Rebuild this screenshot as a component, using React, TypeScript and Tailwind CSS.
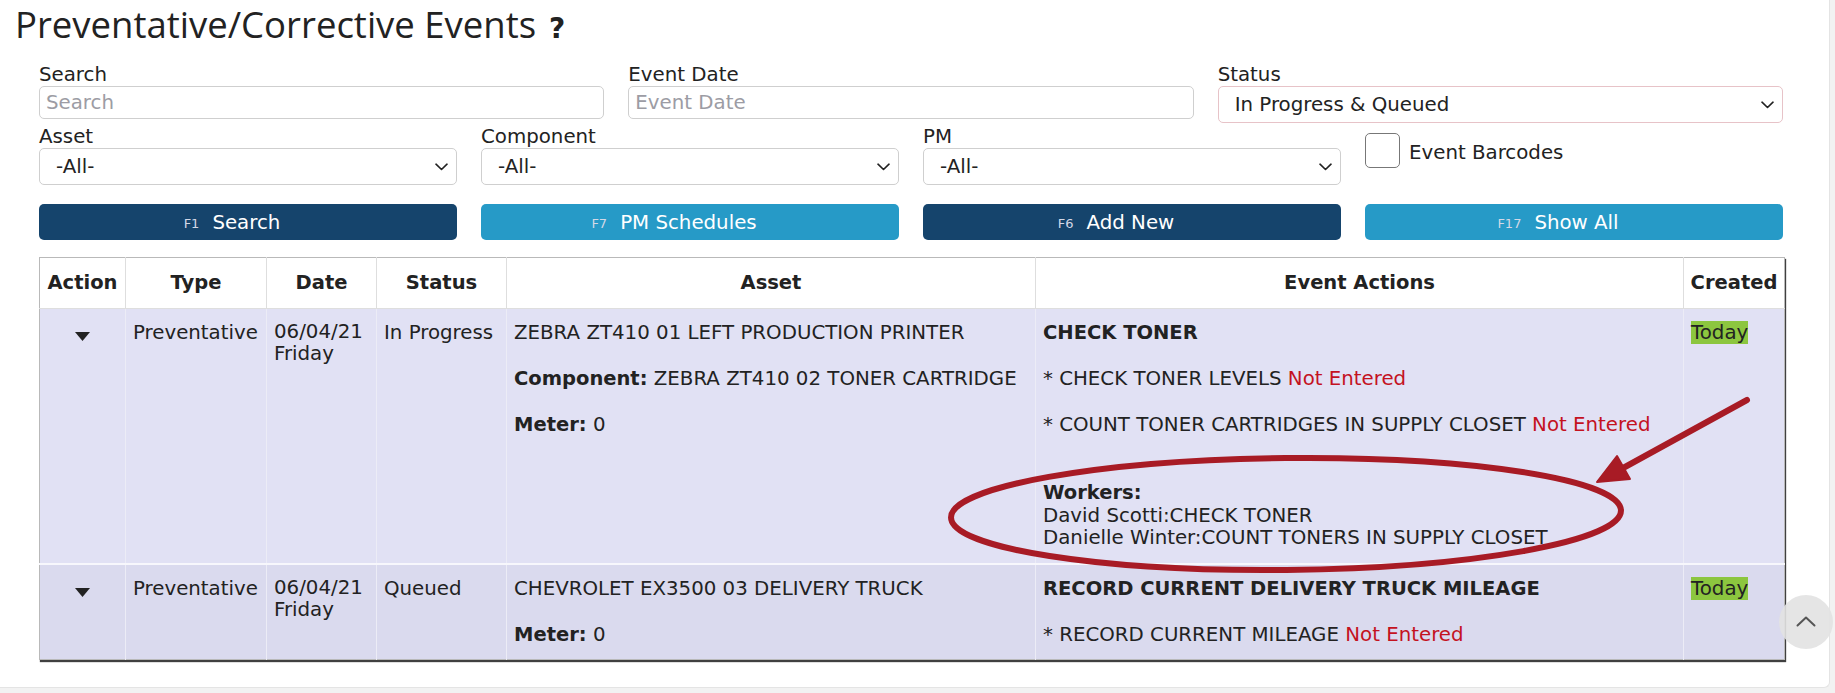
import React from 'react';

const RED = 'text-[#c4121f]';

function Chevron({ className }: { className?: string }) {
  return (
    <svg className={className} width="13" height="8" viewBox="0 0 13 8" fill="none">
      <path d="M1 1.2l5.5 5.3 5.5-5.3" stroke="#222" strokeWidth="1.6" strokeLinecap="round" strokeLinejoin="round" />
    </svg>
  );
}

function FakeSelect({ value, pink }: { value: string; pink?: boolean }) {
  return (
    <div
      className={`flex h-[37px] items-center justify-between rounded-[5px] border bg-white pl-[16px] pr-[8px] ${
        pink ? 'border-[#e7c3c8]' : 'border-[#cfcfcf]'
      }`}
    >
      <span className="text-[#222]">{value}</span>
      <Chevron />
    </div>
  );
}

function Field({ label, children }: { label: string; children: React.ReactNode }) {
  return (
    <div className="flex flex-col">
      <span className="leading-[23px] text-[#222]">{label}</span>
      {children}
    </div>
  );
}

function Btn({ fkey, label, dark }: { fkey: string; label: string; dark?: boolean }) {
  return (
    <button
      className={`flex h-[36px] items-center justify-center gap-[13px] rounded-[5px] pr-[32px] ${
        dark ? 'bg-[#15446c]' : 'bg-[#269ac7]'
      }`}
    >
      <span className="pt-[3px] text-[13px] text-[#d3d8e6]">{fkey}</span>
      <span className="text-white">{label}</span>
    </button>
  );
}

function Caret() {
  return (
    <svg className="mx-auto mt-[11px]" width="15" height="9" viewBox="0 0 15 9">
      <path d="M0 0h15L7.5 9z" fill="#222" />
    </svg>
  );
}

const td = 'align-top border-r border-[#ececf6] px-[7px] pt-[12px] pb-[13px]';
const th = 'border-r border-b border-[#dedede] pt-[13px] pb-[14px] text-center font-bold text-[19.5px]';

export default function App() {
  return (
    <div className="relative min-h-[693px] w-full bg-[#f2f2f2] font-['DejaVu_Sans',sans-serif] text-[19.8px] leading-[23px] text-[#222]">
      <div className="h-[688px] w-[1830px] rounded-br-[6px] border-r border-b border-[#e4e4e4] bg-white pt-[3px]">
        <h1 className="flex h-[43px] items-baseline pl-[15px] font-['Open_Sans',sans-serif] text-[36.5px] leading-[43px] text-[#222]">
          Preventative/Corrective Events
          <span className="ml-[13px] font-['DejaVu_Sans',sans-serif] text-[28px] font-bold">?</span>
        </h1>

        <div className="mt-[17px] pl-[39px] pr-[46px]">
          <div className="grid grid-cols-3 gap-x-[24px]">
            <Field label="Search">
              <div className="flex h-[33px] items-center rounded-[5px] border border-[#cfcfcf] pl-[6px] text-[#9c9ca4]">
                Search
              </div>
            </Field>
            <Field label="Event Date">
              <div className="flex h-[33px] items-center rounded-[5px] border border-[#cfcfcf] pl-[6px] text-[#9c9ca4]">
                Event Date
              </div>
            </Field>
            <Field label="Status">
              <FakeSelect value="In Progress & Queued" pink />
            </Field>
          </div>

          <div className="mt-[2px] grid grid-cols-4 gap-x-[24px]">
            <Field label="Asset">
              <FakeSelect value="-All-" />
            </Field>
            <Field label="Component">
              <FakeSelect value="-All-" />
            </Field>
            <Field label="PM">
              <FakeSelect value="-All-" />
            </Field>
            <div className="flex items-center gap-[9px] self-start pt-[8px]">
              <div className="h-[35px] w-[35px] rounded-[5px] border border-[#777] bg-white" />
              <span className="pt-[4px]">Event Barcodes</span>
            </div>
          </div>

          <div className="mt-[19px] grid grid-cols-4 gap-x-[24px]">
            <Btn fkey="F1" label="Search" dark />
            <Btn fkey="F7" label="PM Schedules" />
            <Btn fkey="F6" label="Add New" dark />
            <Btn fkey="F17" label="Show All" />
          </div>

          <table className="mt-[17px] w-full table-fixed border-collapse border border-[#b9b9b9] shadow-[1px_2px_1px_rgba(0,0,0,0.75)]">
            <colgroup>
              <col className="w-[86px]" />
              <col className="w-[141px]" />
              <col className="w-[110px]" />
              <col className="w-[130px]" />
              <col className="w-[529px]" />
              <col className="w-[648px]" />
              <col className="w-[101px]" />
            </colgroup>
            <thead>
              <tr className="bg-white">
                <th className={th}>Action</th>
                <th className={th}>Type</th>
                <th className={th}>Date</th>
                <th className={th}>Status</th>
                <th className={th}>Asset</th>
                <th className={th}>Event Actions</th>
                <th className={`${th} border-r-0`}>Created</th>
              </tr>
            </thead>
            <tbody>
              <tr className="border-b-2 border-[#f7f7fc] bg-[#e1e1f4]">
                <td className={td}>
                  <Caret />
                </td>
                <td className={td}>Preventative</td>
                <td className={`${td} leading-[22px]`}>
                  06/04/21
                  <br />
                  Friday
                </td>
                <td className={td}>In Progress</td>
                <td className={td}>
                  <p className="mb-[23px]">ZEBRA ZT410 01 LEFT PRODUCTION PRINTER</p>
                  <p className="mb-[23px]">
                    <b className="text-[19.5px]">Component:</b> ZEBRA ZT410 02 TONER CARTRIDGE
                  </p>
                  <p>
                    <b className="text-[19.5px]">Meter:</b> 0
                  </p>
                </td>
                <td className={td}>
                  <p className="mb-[23px] text-[19.5px] font-bold">CHECK TONER</p>
                  <p className="mb-[23px]">
                    * CHECK TONER LEVELS <span className={RED}>Not Entered</span>
                  </p>
                  <p className="mb-[46px]">
                    * COUNT TONER CARTRIDGES IN SUPPLY CLOSET <span className={RED}>Not Entered</span>
                  </p>
                  <div className="leading-[22.5px]">
                    <b className="text-[19.5px]">Workers:</b>
                    <br />
                    David Scotti:CHECK TONER
                    <br />
                    Danielle Winter:COUNT TONERS IN SUPPLY CLOSET
                  </div>
                </td>
                <td className={`${td} border-r-0 px-[6px]`}>
                  <span className="bg-[#8cc63f]">Today</span>
                </td>
              </tr>
              <tr className="bg-[#dadaee]">
                <td className={td}>
                  <Caret />
                </td>
                <td className={td}>Preventative</td>
                <td className={`${td} leading-[22px]`}>
                  06/04/21
                  <br />
                  Friday
                </td>
                <td className={td}>Queued</td>
                <td className={td}>
                  <p className="mb-[23px]">CHEVROLET EX3500 03 DELIVERY TRUCK</p>
                  <p>
                    <b className="text-[19.5px]">Meter:</b> 0
                  </p>
                </td>
                <td className={td}>
                  <p className="mb-[23px] text-[19.5px] font-bold">RECORD CURRENT DELIVERY TRUCK MILEAGE</p>
                  <p>
                    * RECORD CURRENT MILEAGE <span className={RED}>Not Entered</span>
                  </p>
                </td>
                <td className={`${td} border-r-0 px-[6px]`}>
                  <span className="bg-[#8cc63f]">Today</span>
                </td>
              </tr>
            </tbody>
          </table>
        </div>
      </div>

      {/* annotation drawn over the screenshot */}
      <svg className="pointer-events-none absolute left-0 top-0" width="1835" height="693" viewBox="0 0 1835 693">
        <ellipse cx="1286" cy="514" rx="335" ry="56" fill="none" stroke="#a81b25" strokeWidth="6" transform="rotate(-0.6 1286 514)" />
        <path d="M1747 400L1614 473" stroke="#a81b25" strokeWidth="6" strokeLinecap="round" />
        <path d="M1597 482L1617 456L1630 479z" fill="#a81b25" stroke="#a81b25" strokeWidth="2" strokeLinejoin="round" />
      </svg>

      <div className="absolute left-[1779px] top-[595px] flex h-[54px] w-[54px] items-center justify-center rounded-full bg-[#e2e2e2]/90">
        <svg width="20" height="11" viewBox="0 0 20 11" fill="none" className="mb-[2px]">
          <path d="M1.5 9.5L10 1.5l8.5 8" stroke="#555" strokeWidth="2" strokeLinecap="round" strokeLinejoin="round" />
        </svg>
      </div>
    </div>
  );
}
